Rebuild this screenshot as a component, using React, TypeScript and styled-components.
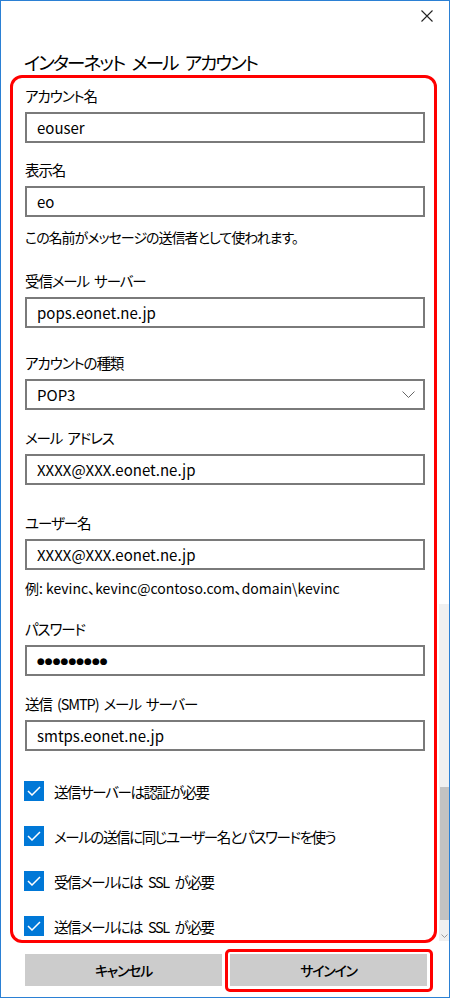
import React from 'react'
import styled, { createGlobalStyle } from 'styled-components'

const GlobalStyle = createGlobalStyle`
  html, body {
    margin: 0;
    padding: 0;
    background: #ffffff;
  }
  body {
    font-family: "Noto Sans CJK JP", "Noto Sans", sans-serif;
    font-feature-settings: "palt";
    color: #000000;
  }
`

const Window = styled.div`
  position: relative;
  box-sizing: border-box;
  width: 450px;
  height: 998px;
  border: 1px solid #2b80d4;
  background: #ffffff;
  overflow: hidden;
`

const TitleBar = styled.div`
  display: flex;
  justify-content: flex-end;
  align-items: center;
  height: 30px;
  padding-right: 16px;
`

const CloseButton = styled.button`
  display: flex;
  align-items: center;
  justify-content: center;
  width: 12px;
  height: 12px;
  padding: 0;
  border: none;
  background: transparent;
`

const Title = styled.h1`
  margin: 18px 0 0 23px;
  font-size: 18.5px;
  line-height: 26px;
  font-weight: 400;
  letter-spacing: -1.9px;
  word-spacing: 5px;
  color: #000000;
`

const FormPanel = styled.div`
  box-sizing: border-box;
  width: 427px;
  margin-left: 9px;
  padding: 8px 9px 4px 12px;
  border: 3px solid #ff0000;
  border-radius: 12px;
`

const Field = styled.div<{ $top: number }>`
  display: flex;
  flex-direction: column;
  margin-top: ${(p) => p.$top}px;
`

const Label = styled.div`
  font-size: 14.5px;
  line-height: 20px;
  letter-spacing: -1.1px;
  word-spacing: 3px;
  margin-bottom: 6px;
`

const Note = styled.div<{ $top: number; $tight?: boolean }>`
  margin-top: ${(p) => p.$top}px;
  font-size: 14px;
  line-height: 20px;
  letter-spacing: ${(p) => (p.$tight ? '-1px' : '0')};
`

const TextBox = styled.div`
  box-sizing: border-box;
  display: flex;
  align-items: center;
  justify-content: space-between;
  height: 31px;
  padding: 0 8px 0 10px;
  border: 2px solid #7a7a7a;
  font-size: 15px;
  color: #000000;
`

const Dots = styled.span`
  font-family: "DejaVu Sans", sans-serif;
  font-size: 9px;
  letter-spacing: 0;
`

const CheckList = styled.div`
  display: flex;
  flex-direction: column;
  gap: 25px;
  margin-top: 30px;
`

const CheckRow = styled.label`
  display: flex;
  align-items: center;
  gap: 9px;
  height: 20px;
  margin-left: -1px;
  font-size: 14.5px;
  letter-spacing: -1.4px;
  word-spacing: 4px;
  white-space: pre;
`

const CheckBox = styled.span`
  display: flex;
  align-items: center;
  justify-content: center;
  width: 20px;
  height: 20px;
  margin-right: 1px;
  background: #0078d7;
`

const ButtonBar = styled.div`
  display: grid;
  grid-template-columns: 1fr 1fr;
  gap: 8px;
  margin-top: 11px;
  padding: 0 22px 0 24px;
`

const Button = styled.button<{ $highlight?: boolean }>`
  position: relative;
  height: 32px;
  border: none;
  background: #cccccc;
  font-family: inherit;
  font-feature-settings: "palt";
  font-size: 14px;
  font-weight: 500;
  letter-spacing: -1.3px;
  color: #000000;

  ${(p) =>
    p.$highlight &&
    `
    &::after {
      content: '';
      position: absolute;
      inset: -5px -6px -6px -5px;
      border: 3px solid #ff0000;
      border-radius: 5px;
    }
  `}
`

const ScrollBar = styled.div`
  position: absolute;
  right: 0;
  top: 603px;
  width: 10px;
  height: 337px;
  background: #f0f0f0;
  display: flex;
  flex-direction: column;
  align-items: center;
`

const Thumb = styled.div`
  width: 9px;
  height: 133px;
  margin-top: 183px;
  margin-left: 1px;
  background: #c2c2c2;
`

const ArrowDown = styled.div`
  margin-top: auto;
  margin-bottom: 3px;
  display: flex;
`

const Check = () => (
  <svg width="14" height="10" viewBox="0 0 14 10">
    <polyline points="1,5 5,9 13,1" fill="none" stroke="#ffffff" strokeWidth="1.5" />
  </svg>
)

const fields = [
  { label: 'アカウント名', value: 'eouser', top: 0 },
  { label: '表示名', value: 'eo', top: 17 },
]

const checks = [
  '送信サーバーは認証が必要',
  'メールの送信に同じユーザー名とパスワードを使う',
  '受信メールには SSL が必要',
  '送信メールには SSL が必要',
]

const App = () => {
  return (
    <>
      <GlobalStyle />
      <Window>
        <TitleBar>
          <CloseButton aria-label="close">
            <svg width="12" height="12" viewBox="0 0 12 12">
              <path d="M0.5 0.5 L11.5 11.5 M11.5 0.5 L0.5 11.5" stroke="#222" strokeWidth="1.1" />
            </svg>
          </CloseButton>
        </TitleBar>
        <Title>インターネット メール アカウント</Title>
        <FormPanel>
          {fields.map((f) => (
            <Field key={f.label} $top={f.top}>
              <Label>{f.label}</Label>
              <TextBox>{f.value}</TextBox>
            </Field>
          ))}
          <Note $top={10} $tight>
            この名前がメッセージの送信者として使われます。
          </Note>
          <Field $top={24}>
            <Label>受信メール サーバー</Label>
            <TextBox>pops.eonet.ne.jp</TextBox>
          </Field>
          <Field $top={25}>
            <Label>アカウントの種類</Label>
            <TextBox>
              POP3
              <svg width="13" height="8" viewBox="0 0 13 8">
                <polyline points="0.5,0.5 6.5,6.5 12.5,0.5" fill="none" stroke="#666" strokeWidth="1" />
              </svg>
            </TextBox>
          </Field>
          <Field $top={18}>
            <Label>メール アドレス</Label>
            <TextBox>XXXX@XXX.eonet.ne.jp</TextBox>
          </Field>
          <Field $top={28}>
            <Label>ユーザー名</Label>
            <TextBox>XXXX@XXX.eonet.ne.jp</TextBox>
          </Field>
          <Note $top={8}>例: kevinc、kevinc@contoso.com、domain\kevinc</Note>
          <Field $top={21}>
            <Label>パスワード</Label>
            <TextBox>
              <Dots>●●●●●●●●●</Dots>
            </TextBox>
          </Field>
          <Field $top={18}>
            <Label>送信 (SMTP) メール サーバー</Label>
            <TextBox>smtps.eonet.ne.jp</TextBox>
          </Field>
          <CheckList>
            {checks.map((t) => (
              <CheckRow key={t}>
                <CheckBox>
                  <Check />
                </CheckBox>
                <span>{t}</span>
              </CheckRow>
            ))}
          </CheckList>
        </FormPanel>
        <ButtonBar>
          <Button>キャンセル</Button>
          <Button $highlight>サインイン</Button>
        </ButtonBar>
        <ScrollBar>
          <Thumb />
          <ArrowDown>
            <svg width="7" height="4" viewBox="0 0 7 4">
              <polyline points="0.5,0.5 3.5,3.5 6.5,0.5" fill="none" stroke="#9a9a9a" strokeWidth="1" />
            </svg>
          </ArrowDown>
        </ScrollBar>
      </Window>
    </>
  )
}

export default App
